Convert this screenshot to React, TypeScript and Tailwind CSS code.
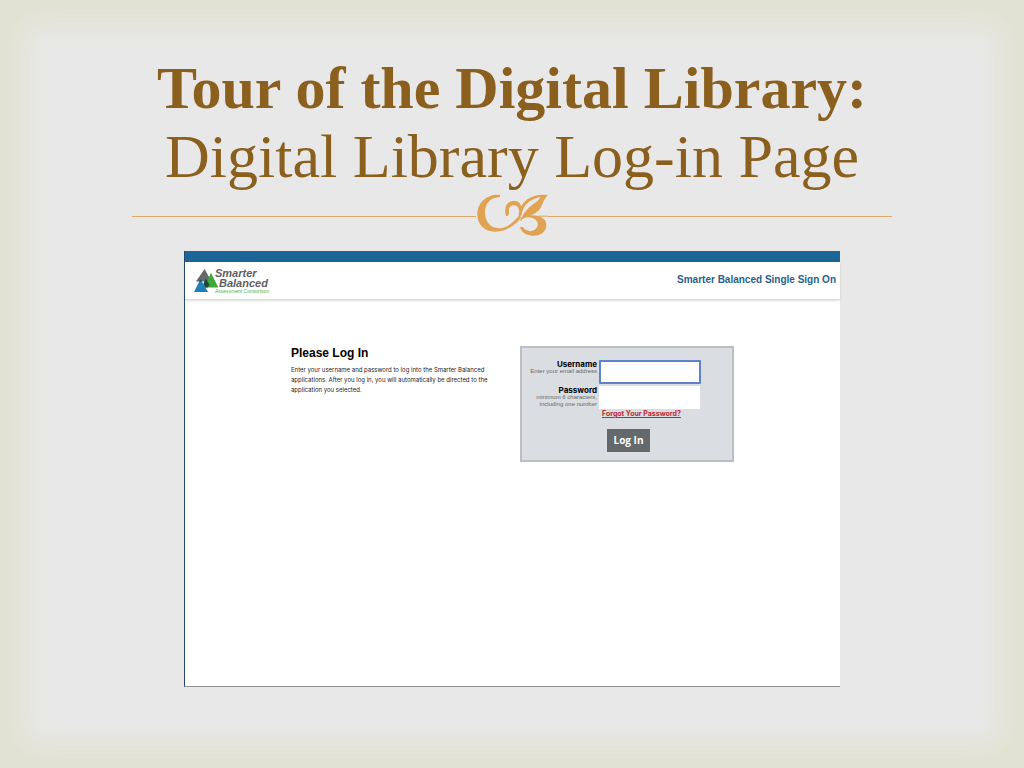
import React, { useState } from "react";

const Flourish = () => (
  <svg viewBox="6 12 216 132" className="h-11 w-[72px] shrink-0" fill="#dfa352" aria-hidden="true">
    <path d="M78 15C42 11 10 36 10 73C10 106 34 126 64 125C98 124 124 106 142 82L136 76C120 98 96 115 74 115C48 114 33 94 33 67C33 40 50 22 78 21Z" />
    <path d="M96 78C88 52 100 32 120 32C138 32 146 48 142 74L136 80C138 58 132 46 120 46C107 46 103 56 105 70C105 76 101 79 96 78Z" />
    <path d="M222 15C182 12 138 24 134 80L142 76C146 50 162 28 200 21C192 36 172 44 158 60C150 69 146 76 143 84C168 80 188 70 197 58C206 44 208 28 222 15Z" />
    <path d="M141 84C176 66 217 78 217 104C217 128 196 138 174 137C154 136 141 125 138 112L147 111C153 121 168 127 180 121C200 110 194 84 164 82C154 81 146 86 138 94Z" />
    <path d="M192 77H222V80H192Z" />
  </svg>
);

const Logo = () => (
  <div className="flex items-start font-['Liberation_Sans',sans-serif]">
    <svg viewBox="44 70 78 74" className="h-[25px] w-[25px] shrink-0" aria-hidden="true">
      <path d="M77 71L99 110H50Z" fill="#66696c" />
      <path d="M97 83L120 129H76Z" fill="#43a83c" />
      <path d="M64 103L88 143H44Z" fill="#1f80b8" />
      <path d="M81 101L92 120L87 129H79L73 117Z" fill="#194a3c" />
      <path d="M64 103L69 110H60Z" fill="#174766" />
    </svg>
    <div className="-ml-1 flex flex-col">
      <span className="text-[11px] leading-[10px] font-bold italic text-[#5c5f63]">Smarter</span>
      <span className="pl-1 text-[11px] leading-[10px] font-bold italic text-[#5c5f63]">Balanced</span>
      <span className="text-[5px] leading-[6px] italic text-[#4dae45]">Assessment Consortium</span>
    </div>
  </div>
);

const LoginForm = () => {
  const [username, setUsername] = useState("");
  const [password, setPassword] = useState("");

  return (
    <form
      className="w-[214px] border-2 border-[#b9c0c4] bg-[#dadde1] pt-3 pb-2"
      onSubmit={(e) => e.preventDefault()}
    >
      <div className="flex gap-[2px]">
        <label htmlFor="username" className="w-[75px] text-right">
          <span className="block font-['Inter',sans-serif] text-[8px] leading-[8px] font-bold text-black">
            Username
          </span>
          <span className="block text-[6px] leading-[7px] text-[#66696d]">Enter your email address</span>
        </label>
        <input
          id="username"
          type="text"
          value={username}
          onChange={(e) => setUsername(e.target.value)}
          className="h-6 w-[102px] rounded-[1px] border-2 border-[#5f83ca] bg-white px-1 text-[8px] outline-none"
        />
      </div>
      <div className="mt-[2px] flex gap-[2px]">
        <label htmlFor="password" className="w-[75px] text-right">
          <span className="block font-['Inter',sans-serif] text-[8px] leading-[8px] font-bold text-black">
            Password
          </span>
          <span className="block text-[6px] leading-[7px] text-[#66696d]">
            minimum 6 characters,
            <br />
            including one number
          </span>
        </label>
        <input
          id="password"
          type="password"
          value={password}
          onChange={(e) => setPassword(e.target.value)}
          className="h-[23px] w-[101px] bg-white px-1 text-[8px] outline-none"
        />
      </div>
      <div className="flex flex-col items-start pl-20">
        <a
          href="#"
          className="font-['Inter',sans-serif] text-[7px] leading-[9px] font-bold text-[#c2272d] underline"
        >
          Forgot Your Password?
        </a>
        <button
          type="submit"
          className="mt-[11px] ml-[5px] h-[23px] w-[43px] bg-[#65696c] font-['Open_Sans',sans-serif] text-[10px] font-bold text-white"
        >
          Log In
        </button>
      </div>
    </form>
  );
};

export default function App() {
  return (
    <div className="min-h-screen bg-[#e8e8e8] px-6 pt-[54px] pb-20 shadow-[inset_0_0_28px_24px_#e2e2d2]">
      <h1 className="text-center font-['Liberation_Serif',serif] text-[60px] leading-[68px] text-[#8b601e]">
        <span className="block font-bold">Tour of the Digital Library:</span>
        <span className="block text-[62px]">Digital Library Log-in Page</span>
      </h1>
      <div className="mx-auto mt-1 flex max-w-[760px] items-center">
        <div className="h-px flex-1 bg-[#dda865]" />
        <Flourish />
        <div className="h-px flex-1 bg-[#dda865]" />
      </div>

      <div className="mx-auto mt-[13px] min-h-[436px] max-w-[656px] border-b border-l border-b-[#8e8e8e] border-l-[#26496b] bg-white font-['Liberation_Sans',sans-serif]">
        <div className="h-[11px] bg-[#1b6697]" />
        <header className="flex h-[38px] items-start justify-between border-b border-[#dcdcdc] pt-[6px] pr-1 pl-[9px] shadow-sm">
          <Logo />
          <p className="pt-[6px] text-[10px] leading-[12px] font-bold text-[#285f8b]">
            Smarter Balanced Single Sign On
          </p>
        </header>
        <main className="flex justify-center gap-[29px] pt-[46px]">
          <section className="w-[200px]">
            <h2 className="text-[12px] leading-[14px] font-bold text-black">Please Log In</h2>
            <p className="mt-[5px] font-['Inter',sans-serif] text-[6px] leading-[10px] text-[#222]">
              Enter your username and password to log into the Smarter Balanced
              <br />
              applications. After you log in, you will automatically be directed to the
              <br />
              application you selected.
            </p>
          </section>
          <LoginForm />
        </main>
      </div>
    </div>
  );
}
